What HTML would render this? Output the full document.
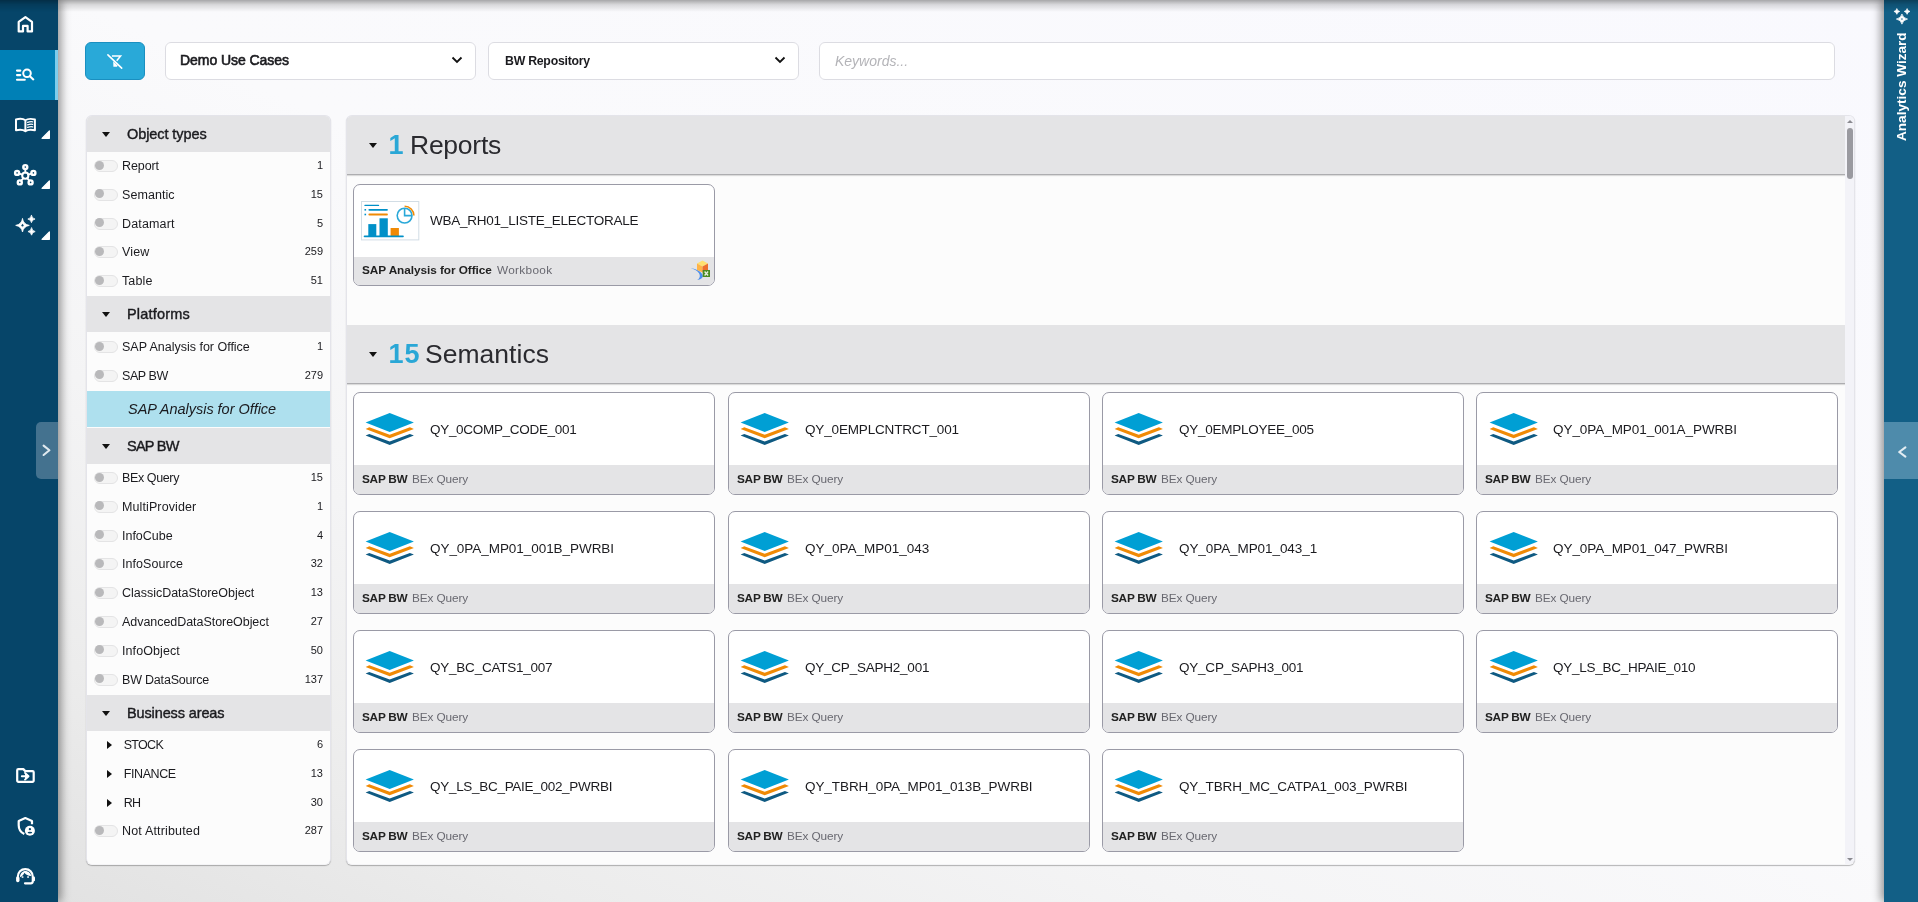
<!DOCTYPE html>
<html lang="en">
<head>
<meta charset="utf-8">
<title>Catalog</title>
<style>
*{box-sizing:border-box;margin:0;padding:0}
html,body{width:1918px;height:902px;overflow:hidden}
#lp,#mp,.sel,#kw,#rbar .lbl{will-change:transform}
body{font-family:"Liberation Sans",sans-serif;color:#1b1b1f;position:relative;
 background:linear-gradient(to top right,#e1e1e1 0%,#ececec 15%,#f4f4f5 31%,#fafafc 52%,#f9f9fe 100%);}
#topshade{position:absolute;left:0;top:0;width:1918px;height:12px;z-index:50;pointer-events:none;
 background:linear-gradient(to bottom,rgba(0,0,0,.33) 0%,rgba(0,0,0,.13) 40%,rgba(0,0,0,0) 100%)}
/* left nav */
#nav{position:absolute;left:0;top:0;width:58px;height:902px;background:#064569;z-index:20;
 box-shadow:3px 0 9px rgba(0,0,0,.42)}
#nav .act{position:absolute;left:0;top:50px;width:58px;height:50px;background:#0080b6;border-right:3px solid #7dcdec}
#nav svg{position:absolute}
#nav .tri{position:absolute;width:0;height:0;border-left:6px solid transparent;border-bottom:6px solid #fff}
#ltog{position:absolute;left:36px;top:422px;width:22px;height:57px;background:#44728f;border-radius:5px 0 0 5px}
/* right bar */
#rbar{position:absolute;left:1884px;top:0;width:34px;height:902px;background:#125f86;z-index:20;
 box-shadow:-3px 0 9px rgba(0,0,0,.42)}
#rtog{position:absolute;left:0;top:422px;width:34px;height:57px;background:#4e8bab}
#rbar .lbl{position:absolute;left:0;top:0;width:34px;height:160px}
#rbar .lbl span{position:absolute;left:18.4px;top:140.5px;transform-origin:0 0;transform:rotate(-90deg) translateY(-50%);
 white-space:nowrap;color:#fff;font-weight:bold;font-size:13.6px;line-height:16px}
/* toolbar */
#fbtn{position:absolute;left:85px;top:42px;width:60px;height:38px;background:#29a9d8;border:1px solid #1a8fc0;border-radius:6px}
.sel{position:absolute;top:42px;height:38px;width:311px;background:#fff;border:1px solid #dcdce2;border-radius:6px}
.sel span{position:absolute;left:14px;top:0;line-height:34.5px;font-weight:bold;white-space:nowrap}
.sel svg{position:absolute;right:12px;top:11px}
#kw{position:absolute;left:819px;top:42px;width:1016px;height:38px;background:#fff;border:1px solid #dcdce2;border-radius:6px}
#kw span{position:absolute;left:15px;top:0;line-height:36px;font-style:italic;color:#b4b4b8;font-size:14px}
/* left filter panel */
#lp{position:absolute;left:86px;top:115px;width:245px;height:750px;background:#fcfcfc;
 border:1px solid #e4e4ea;border-bottom-color:#f4f4f6;border-radius:6px;overflow:hidden;box-shadow:0 1px 1px rgba(0,0,0,.27)}
.lh{position:absolute;left:0;width:243px;height:36px;background:#e4e4e6}
.lh i{position:absolute;left:15px;top:16px;width:0;height:0;border-left:4.5px solid transparent;border-right:4.5px solid transparent;border-top:5px solid #111}
.lh b{position:absolute;left:40px;top:0;line-height:36px;font-size:14.5px;font-weight:normal;-webkit-text-stroke:.4px #1b1b1f;white-space:nowrap}
.lr{position:absolute;left:0;width:243px;height:29px}
.lr .tg{position:absolute;left:7px;top:8px;width:24px;height:12px;border-radius:6px;background:#f4f4f4;border:1px solid #e4e4e5}
.lr .tg::after{content:"";position:absolute;left:0;top:-.4px;width:9px;height:9px;border-radius:50%;background:#b9b9bb}
.lr .tx{position:absolute;left:35px;top:0;line-height:29px;font-size:12.5px;white-space:nowrap}
.lr .ct{position:absolute;right:7px;top:0;line-height:27.4px;font-size:11px;white-space:nowrap}
.lr .ar{position:absolute;left:20px;top:10px;width:0;height:0;border-top:4px solid transparent;border-bottom:4px solid transparent;border-left:5px solid #111}
#hl{position:absolute;left:0;top:275px;width:243px;height:36px;background:#aee0ee}
#hl span{position:absolute;left:41px;top:0;line-height:36px;font-style:italic;font-size:14.5px;white-space:nowrap}
/* main panel */
#mp{position:absolute;left:346px;top:115px;width:1509px;height:750px;background:#fcfcfc;
 border:1px solid #e4e4ea;border-bottom-color:#f4f4f6;border-radius:6px;overflow:hidden;box-shadow:0 1px 1px rgba(0,0,0,.27)}
.sh{position:absolute;left:0;width:1498px;height:59px;background:#e4e4e6;border-bottom:1px solid #adadb0;box-shadow:0 1px 1px rgba(0,0,0,.13)}
.sh i{position:absolute;left:21.8px;top:26.6px;width:0;height:0;border-left:4.5px solid transparent;border-right:4.5px solid transparent;border-top:5px solid #111}
.sh .n{position:absolute;left:41.5px;top:0;line-height:59px;font-size:27px;color:#2aa7d6;font-weight:bold;white-space:nowrap}
.sh .t{position:absolute;top:0;line-height:59px;font-size:26.5px;white-space:nowrap;color:#2a2a2f}
.cd{position:absolute;width:362px;height:102px;background:#fff;border:1px solid #9a9aa6;border-radius:7px;overflow:hidden}
.cd .ft{position:absolute;left:0;top:72px;width:360px;height:28px;background:#e4e4e6}
.cd .ft b{position:absolute;left:8px;top:0;line-height:27px;font-size:11.8px;white-space:nowrap;color:#222}
.cd .ft em{position:absolute;top:0;line-height:27px;font-size:11.8px;font-style:normal;color:#686870;white-space:nowrap}
.cd .nm{position:absolute;left:76px;top:0;line-height:71px;font-size:13.5px;white-space:nowrap;color:#1b1b1f}
.cd svg.ic{position:absolute;left:11px;top:19px}
.cd.s{height:103px}
.cd.s .ft{height:29px}
.cd.s .nm{top:.7px}
.cd.s .ft b,.cd.s .ft em{line-height:28.5px}
#sb{position:absolute;left:1498px;top:0;width:9px;height:748px;background:#f3f3f8}
#sb .th{position:absolute;left:2px;top:12px;width:6px;height:51px;border-radius:3px;background:#9a9aa0}
#sb .u{position:absolute;left:2px;top:4px;width:0;height:0;border-left:3px solid transparent;border-right:3px solid transparent;border-bottom:3px solid #8a8a90}
#sb .d{position:absolute;left:2px;bottom:3px;width:0;height:0;border-left:3px solid transparent;border-right:3px solid transparent;border-top:3px solid #8a8a90}
</style>
</head>
<body>
<div id="topshade"></div>

<!-- NAV -->
<div id="nav">
 <div class="act"></div>
 <div id="ltog"><svg width="22" height="57" viewBox="0 0 22 57" style="left:0;top:0"><path d="M7.6 23.6L13.4 28.3L7.6 33" fill="none" stroke="#e0e9ef" stroke-width="2.1" stroke-linecap="round" stroke-linejoin="round"/></svg></div>
 <svg width="58" height="902" viewBox="0 0 58 902" style="left:0;top:0" fill="none" stroke="#fff" stroke-linecap="round" stroke-linejoin="round">
 <!-- home -->
 <path d="M18.7 31.4V21.9L25.4 17.1L32 21.9V31.4H27.6V25.9H23V31.4Z" stroke-width="2.2"/>
 <!-- list search -->
 <path d="M17 70.6H20.3M17 75.1H20.3M17 79.8H24.8" stroke-width="2.1"/>
 <circle cx="27" cy="73.3" r="3.8" stroke-width="2"/>
 <path d="M29.9 76.2L33.3 79.4" stroke-width="2.1"/>
 <!-- book -->
 <path d="M25.4 120.3C23.4 118.8 19.6 118.6 16 119.4V130.2C19.6 129.4 23.4 129.7 25.4 131.2C27.4 129.7 31.2 129.4 34.9 130.2V119.4C31.2 118.6 27.4 118.8 25.4 120.3ZM25.4 120.3V131" stroke-width="2"/>
 <path d="M27.6 122.3C29.4 121.7 31 121.6 32.6 121.8M27.6 124.8C29.4 124.2 31 124.1 32.6 124.3M27.6 127.3C29.4 126.7 31 126.6 32.6 126.8" stroke-width="1.3"/>
 <!-- hub -->
 <path d="M25.3 172.6V169.2M22.4 174.7L19.2 173.6M28.2 174.7L31.3 173.6M23.5 178.2L21.2 180.6M27.1 178.2L29.3 180.6" stroke-width="1.8"/>
 <circle cx="25.3" cy="175.7" r="3.1" stroke-width="2"/>
 <circle cx="25.3" cy="167.1" r="2" stroke-width="2.4"/>
 <circle cx="17.1" cy="172.9" r="2" stroke-width="2.4"/>
 <circle cx="33.4" cy="172.9" r="2" stroke-width="2.4"/>
 <circle cx="19.8" cy="182.4" r="2" stroke-width="2.4"/>
 <circle cx="30.6" cy="182.4" r="2" stroke-width="2.4"/>
 <!-- sparkles -->
 <path fill-rule="evenodd" fill="#fff" stroke="#fff" stroke-width=".8" stroke-linejoin="round" d="M22.5 218.8Q23.5 224.4 29.3 225.4Q23.5 226.4 22.5 232.0Q21.5 226.4 15.7 225.4Q21.5 224.4 22.5 218.8ZM22.5 223.6L20.9 225.4L22.5 227.20000000000002L24.1 225.4Z"/>
 <path fill="#fff" stroke="#fff" stroke-width=".8" stroke-linejoin="round" d="M31.45 215.45000000000002Q32.0 218.5 35.05 219.05Q32.0 219.60000000000002 31.45 222.65Q30.9 219.60000000000002 27.849999999999998 219.05Q30.9 218.5 31.45 215.45000000000002Z"/>
 <path fill="#fff" stroke="#fff" stroke-width=".8" stroke-linejoin="round" d="M31.57 227.97Q32.12 231.01999999999998 35.17 231.57Q32.12 232.12 31.57 235.17Q31.02 232.12 27.97 231.57Q31.02 231.01999999999998 31.57 227.97Z"/>
 <!-- corner triangles -->
 <path d="M49.4 130.9V138.3H42Z M49.4 180.9V188.3H42Z M49.4 231.9V239.3H42Z" fill="#fff" stroke-width="1.2"/>
 <!-- folder -->
 <path d="M18.4 769.1H23.3L25.3 771.1H32.5A1.2 1.2 0 0 1 33.7 772.3V780.6A1.2 1.2 0 0 1 32.5 781.8H18.4A1.2 1.2 0 0 1 17.2 780.6V770.3A1.2 1.2 0 0 1 18.4 769.1Z" stroke-width="2.2"/>
 <path d="M21.8 776.2H27.5" stroke-width="1.9"/>
 <path d="M25 772.9L28.6 776.2L25 779.6" stroke-width="1.9" fill="#fff"/>
 <!-- shield -->
 <path d="M32 824.2V820.9L25.3 818.1L18.7 820.9V825.2C18.7 829.3 21 832.4 24.3 834" stroke-width="2.2" stroke-linecap="butt"/>
 <circle cx="29.9" cy="830.8" r="5" fill="#fff" stroke="none"/>
 <circle cx="29.9" cy="829.2" r="1.15" fill="#064569" stroke="none"/>
 <ellipse cx="29.9" cy="832.6" rx="2.3" ry="0.85" fill="#064569" stroke="none"/>
 <!-- headset -->
 <path d="M17.8 878V876.8C17.8 872.3 21.1 869.1 25.3 869.1C29.5 869.1 32.8 872.3 32.8 876.8V881.3C32.8 882.6 32 883.3 30.8 883.3H25" stroke-width="2.2"/>
 <rect x="16.1" y="876.4" width="3.4" height="5.8" rx="1.6" fill="#fff" stroke="none"/>
 <rect x="33" y="876.6" width="2" height="4.6" rx="1" fill="#fff" stroke="none"/>
 <path d="M19.9 877.2C20.2 873.5 22.5 871 25.3 871C28.3 871 30.8 873.2 31.2 875.9C28.4 876 25.6 874.6 24.4 872.7C23.6 874.8 21.9 876.6 19.9 877.2Z" fill="#fff" stroke="none"/>
 <rect x="21.7" y="876.3" width="1.7" height="1.5" fill="#fff" stroke="none"/>
 <rect x="27.2" y="876.3" width="1.7" height="1.5" fill="#fff" stroke="none"/>
 <!-- left toggle chevron -->
</svg>
</div>

<!-- RIGHT BAR -->
<div id="rbar">
 <div class="lbl"><span>Analytics Wizard</span></div>
 <div id="rtog"><svg width="34" height="57" viewBox="0 0 34 57"><path d="M21.4 25.3L15.2 30L21.4 34.7" fill="none" stroke="#e3edf3" stroke-width="2.1" stroke-linecap="round" stroke-linejoin="round"/></svg></div>
 <svg width="34" height="40" viewBox="0 0 34 40" style="position:absolute;left:0;top:0" fill="#fff" stroke="#fff" stroke-width=".7" stroke-linejoin="round">
  <path d="M12.85 8.54Q13.3 10.99 15.75 11.44Q13.3 11.89 12.85 14.34Q12.4 11.89 9.95 11.44Q12.4 10.99 12.85 8.54Z"/>
  <path d="M23.1 8.54Q23.55 10.99 26.0 11.44Q23.55 11.89 23.1 14.34Q22.65 11.89 20.2 11.44Q22.65 10.99 23.1 8.54Z"/>
  <path fill-rule="evenodd" d="M17.95 13.97Q18.85 18.17 23.55 19.07Q18.85 19.97 17.95 24.17Q17.05 19.97 12.35 19.07Q17.05 18.17 17.95 13.97ZM17.95 17.92A1.15 1.15 0 1 0 17.95 20.22A1.15 1.15 0 1 0 17.95 17.92Z"/>
 </svg>
</div>

<!-- TOOLBAR -->
<div id="fbtn"><svg width="58" height="36" viewBox="86 43 58 36" style="position:absolute;left:0;top:0">
 <path d="M107.9 54.8L121.7 68.1" stroke="#fff" stroke-width="1.6" stroke-linecap="round" fill="none"/>
 <path d="M111.9 56H120.6L116.7 60.7" stroke="#fff" stroke-width="1.5" fill="none" stroke-linejoin="miter"/>
 <path d="M113.2 61.3L117.2 65.2V66.8H113.4Z" fill="#fff"/>
</svg></div>
<div class="sel" style="left:165px"><span style="font-size:14px;font-weight:normal;-webkit-text-stroke:.6px #1b1b1f;letter-spacing:-.06px">Demo Use Cases</span>
 <svg width="12" height="12" viewBox="0 0 12 12"><path d="M1.5 3.5 L6 8 L10.5 3.5" fill="none" stroke="#111" stroke-width="1.8"/></svg></div>
<div class="sel" style="left:488px"><span style="font-size:12.3px;left:16px;letter-spacing:-.25px;line-height:36.5px">BW Repository</span>
 <svg width="12" height="12" viewBox="0 0 12 12"><path d="M1.5 3.5 L6 8 L10.5 3.5" fill="none" stroke="#111" stroke-width="1.8"/></svg></div>
<div id="kw"><span>Keywords...</span></div>

<!-- LEFT PANEL -->
<div id="lp">
<div class="lh" style="top:0px"><i></i><b style="letter-spacing:-0.083px">Object types</b></div>
<div class="lr" style="top:36px"><span class="tg"></span><span class="tx"><span style="letter-spacing:-0.086px">Report</span></span><span class="ct">1</span></div>
<div class="lr" style="top:64.8px"><span class="tg"></span><span class="tx"><span style="letter-spacing:0.062px">Semantic</span></span><span class="ct">15</span></div>
<div class="lr" style="top:93.6px"><span class="tg"></span><span class="tx"><span style="letter-spacing:0.15px">Datamart</span></span><span class="ct">5</span></div>
<div class="lr" style="top:122.4px"><span class="tg"></span><span class="tx"><span style="letter-spacing:0.133px">View</span></span><span class="ct">259</span></div>
<div class="lr" style="top:151.2px"><span class="tg"></span><span class="tx"><span style="letter-spacing:0.123px">Table</span></span><span class="ct">51</span></div>
<div class="lh" style="top:180px"><i></i><b style="letter-spacing:0.196px">Platforms</b></div>
<div class="lr" style="top:217px"><span class="tg"></span><span class="tx"><span style="letter-spacing:-0.012px">SAP Analysis for Office</span></span><span class="ct">1</span></div>
<div class="lr" style="top:245.8px"><span class="tg"></span><span class="tx"><span style="letter-spacing:-0.437px">SAP BW</span></span><span class="ct">279</span></div>
<div id="hl"><span style="letter-spacing:-0.03px">SAP Analysis for Office</span></div>
<div class="lh" style="top:312px"><i></i><b style="letter-spacing:-0.75px">SAP BW</b></div>
<div class="lr" style="top:348px"><span class="tg"></span><span class="tx"><span style="letter-spacing:-0.382px">BEx Query</span></span><span class="ct">15</span></div>
<div class="lr" style="top:376.8px"><span class="tg"></span><span class="tx"><span style="letter-spacing:0.105px">MultiProvider</span></span><span class="ct">1</span></div>
<div class="lr" style="top:405.6px"><span class="tg"></span><span class="tx"><span style="letter-spacing:-0.017px">InfoCube</span></span><span class="ct">4</span></div>
<div class="lr" style="top:434.4px"><span class="tg"></span><span class="tx"><span style="letter-spacing:0.054px">InfoSource</span></span><span class="ct">32</span></div>
<div class="lr" style="top:463.2px"><span class="tg"></span><span class="tx"><span style="letter-spacing:-0.018px">ClassicDataStoreObject</span></span><span class="ct">13</span></div>
<div class="lr" style="top:492.0px"><span class="tg"></span><span class="tx"><span style="letter-spacing:-0.048px">AdvancedDataStoreObject</span></span><span class="ct">27</span></div>
<div class="lr" style="top:520.8px"><span class="tg"></span><span class="tx"><span style="letter-spacing:0.082px">InfoObject</span></span><span class="ct">50</span></div>
<div class="lr" style="top:549.6px"><span class="tg"></span><span class="tx"><span style="letter-spacing:-0.194px">BW DataSource</span></span><span class="ct">137</span></div>
<div class="lh" style="top:579px"><i></i><b style="letter-spacing:-0.124px">Business areas</b></div>
<div class="lr" style="top:615px"><span class="ar"></span><span class="tx" style="left:36.7px"><span style="letter-spacing:-0.687px">STOCK</span></span><span class="ct">6</span></div>
<div class="lr" style="top:643.8px"><span class="ar"></span><span class="tx" style="left:36.7px"><span style="letter-spacing:-0.395px">FINANCE</span></span><span class="ct">13</span></div>
<div class="lr" style="top:672.6px"><span class="ar"></span><span class="tx" style="left:36.7px"><span style="letter-spacing:-0.727px">RH</span></span><span class="ct">30</span></div>
<div class="lr" style="top:701.4px"><span class="tg"></span><span class="tx"><span style="letter-spacing:0.162px">Not Attributed</span></span><span class="ct">287</span></div>
</div>

<!-- MAIN PANEL -->
<div id="mp">
<div class="sh" style="top:0px"><i></i><span class="n" style="letter-spacing:0px">1</span><span class="t" style="left:63px;letter-spacing:-0.256px">Reports</span></div>
<div class="cd" style="left:6px;top:68px"><svg class="ic" style="left:7px;top:16px" width="59" height="40" viewBox="0 0 59 40"><rect x="0.5" y="0.5" width="57.3" height="38.4" fill="#fff" stroke="#d2dde5" stroke-width="1"/><path d="M4 4.4H17.5" stroke="#0090c8" stroke-width="1.4" stroke-linecap="round"/><path d="M8.3 8.8H26" stroke="#0090c8" stroke-width="1.8" stroke-linecap="round"/><path d="M8.3 13.5H26" stroke="#f08a05" stroke-width="1.8" stroke-linecap="round"/><rect x="3.5" y="8" width="1.6" height="1.6" fill="#0090c8"/><rect x="3.5" y="12.7" width="1.6" height="1.6" fill="#0090c8"/><rect x="7.3" y="23.1" width="8" height="12" fill="#0090c8"/><rect x="18.5" y="17.3" width="8.3" height="17.8" fill="#0090c8"/><rect x="29.6" y="27" width="8.3" height="8" fill="#f08a05"/><path d="M3.5 35.4H42" stroke="#0090c8" stroke-width="1.6" stroke-linecap="round"/><circle cx="43.6" cy="14.6" r="7.4" fill="none" stroke="#29a8d8" stroke-width="1.6"/><path d="M43.6 7.2V14.6H51" fill="none" stroke="#29a8d8" stroke-width="1.6"/><path d="M43.6 5.3A9.3 9.3 0 0 1 52.9 14.6" fill="none" stroke="#f08a05" stroke-width="1.6"/></svg><span class="nm"><span style="letter-spacing:-0.238px">WBA_RH01_LISTE_ELECTORALE</span></span><div class="ft"><b><span style="letter-spacing:-0.06px">SAP Analysis for Office</span></b><em style="left:143px"><span style="letter-spacing:0.314px">Workbook</span></em><svg style="position:absolute;left:336px;top:3px" width="22" height="22" viewBox="0 0 22 22"><path d="M0.7 8.2C6 8.6 11.5 11.5 12.8 15.5C13.4 17.6 10.5 19.6 7 20C10 18.6 10.6 15.5 8.8 13C7 10.5 4 9 0.7 8.2Z" fill="#4a8ff0"/><polygon points="12.5,0.5 18,3.5 12.5,6.5 7,3.5" fill="#ffe070"/><polygon points="7,3.5 12.5,6.5 12.5,12.5 7,10" fill="#ffb347"/><polygon points="18,3.5 12.5,6.5 12.5,12.5 18,10" fill="#ec6f2d"/><rect x="12.7" y="10" width="7.3" height="7" fill="#4b8b22"/><path d="M14.6 11.5L18.1 15.5M18.1 11.5L14.6 15.5" stroke="#e8f0e0" stroke-width="1.3"/></svg></div></div>
<div class="sh" style="top:209px"><i></i><span class="n" style="letter-spacing:0.9px">15</span><span class="t" style="left:78px;letter-spacing:0.032px">Semantics</span></div>
<div class="cd s" style="left:6px;top:276px"><svg class="ic" width="51" height="34" viewBox="0 0 51 34"><polygon points="0.6,10.6 24.7,1.1 48.9,10.6 24.7,19.9" fill="#009fd4"/><polygon points="0.6,17.05 4.3,15.3 24.7,22.8 44.9,15.3 48.9,17.05 24.7,26.2" fill="#f08a05"/><polygon points="0.6,23.6 4.3,21.9 24.7,29.4 44.9,21.9 48.9,23.6 24.7,32.9" fill="#0f5a82"/></svg><span class="nm"><span style="letter-spacing:-0.304px">QY_0COMP_CODE_001</span></span><div class="ft"><b><span style="letter-spacing:-0.248px">SAP BW</span></b><em style="left:58px"><span style="letter-spacing:-0.104px">BEx Query</span></em></div></div>
<div class="cd s" style="left:381px;top:276px"><svg class="ic" width="51" height="34" viewBox="0 0 51 34"><polygon points="0.6,10.6 24.7,1.1 48.9,10.6 24.7,19.9" fill="#009fd4"/><polygon points="0.6,17.05 4.3,15.3 24.7,22.8 44.9,15.3 48.9,17.05 24.7,26.2" fill="#f08a05"/><polygon points="0.6,23.6 4.3,21.9 24.7,29.4 44.9,21.9 48.9,23.6 24.7,32.9" fill="#0f5a82"/></svg><span class="nm"><span style="letter-spacing:-0.161px">QY_0EMPLCNTRCT_001</span></span><div class="ft"><b><span style="letter-spacing:-0.248px">SAP BW</span></b><em style="left:58px"><span style="letter-spacing:-0.104px">BEx Query</span></em></div></div>
<div class="cd s" style="left:755px;top:276px"><svg class="ic" width="51" height="34" viewBox="0 0 51 34"><polygon points="0.6,10.6 24.7,1.1 48.9,10.6 24.7,19.9" fill="#009fd4"/><polygon points="0.6,17.05 4.3,15.3 24.7,22.8 44.9,15.3 48.9,17.05 24.7,26.2" fill="#f08a05"/><polygon points="0.6,23.6 4.3,21.9 24.7,29.4 44.9,21.9 48.9,23.6 24.7,32.9" fill="#0f5a82"/></svg><span class="nm"><span style="letter-spacing:-0.252px">QY_0EMPLOYEE_005</span></span><div class="ft"><b><span style="letter-spacing:-0.248px">SAP BW</span></b><em style="left:58px"><span style="letter-spacing:-0.104px">BEx Query</span></em></div></div>
<div class="cd s" style="left:1129px;top:276px"><svg class="ic" width="51" height="34" viewBox="0 0 51 34" style="left:12px"><polygon points="0.6,10.6 24.7,1.1 48.9,10.6 24.7,19.9" fill="#009fd4"/><polygon points="0.6,17.05 4.3,15.3 24.7,22.8 44.9,15.3 48.9,17.05 24.7,26.2" fill="#f08a05"/><polygon points="0.6,23.6 4.3,21.9 24.7,29.4 44.9,21.9 48.9,23.6 24.7,32.9" fill="#0f5a82"/></svg><span class="nm"><span style="letter-spacing:-0.054px">QY_0PA_MP01_001A_PWRBI</span></span><div class="ft"><b><span style="letter-spacing:-0.248px">SAP BW</span></b><em style="left:58px"><span style="letter-spacing:-0.104px">BEx Query</span></em></div></div>
<div class="cd s" style="left:6px;top:395px"><svg class="ic" width="51" height="34" viewBox="0 0 51 34"><polygon points="0.6,10.6 24.7,1.1 48.9,10.6 24.7,19.9" fill="#009fd4"/><polygon points="0.6,17.05 4.3,15.3 24.7,22.8 44.9,15.3 48.9,17.05 24.7,26.2" fill="#f08a05"/><polygon points="0.6,23.6 4.3,21.9 24.7,29.4 44.9,21.9 48.9,23.6 24.7,32.9" fill="#0f5a82"/></svg><span class="nm"><span style="letter-spacing:-0.05px">QY_0PA_MP01_001B_PWRBI</span></span><div class="ft"><b><span style="letter-spacing:-0.248px">SAP BW</span></b><em style="left:58px"><span style="letter-spacing:-0.104px">BEx Query</span></em></div></div>
<div class="cd s" style="left:381px;top:395px"><svg class="ic" width="51" height="34" viewBox="0 0 51 34"><polygon points="0.6,10.6 24.7,1.1 48.9,10.6 24.7,19.9" fill="#009fd4"/><polygon points="0.6,17.05 4.3,15.3 24.7,22.8 44.9,15.3 48.9,17.05 24.7,26.2" fill="#f08a05"/><polygon points="0.6,23.6 4.3,21.9 24.7,29.4 44.9,21.9 48.9,23.6 24.7,32.9" fill="#0f5a82"/></svg><span class="nm"><span style="letter-spacing:-0.009px">QY_0PA_MP01_043</span></span><div class="ft"><b><span style="letter-spacing:-0.248px">SAP BW</span></b><em style="left:58px"><span style="letter-spacing:-0.104px">BEx Query</span></em></div></div>
<div class="cd s" style="left:755px;top:395px"><svg class="ic" width="51" height="34" viewBox="0 0 51 34"><polygon points="0.6,10.6 24.7,1.1 48.9,10.6 24.7,19.9" fill="#009fd4"/><polygon points="0.6,17.05 4.3,15.3 24.7,22.8 44.9,15.3 48.9,17.05 24.7,26.2" fill="#f08a05"/><polygon points="0.6,23.6 4.3,21.9 24.7,29.4 44.9,21.9 48.9,23.6 24.7,32.9" fill="#0f5a82"/></svg><span class="nm"><span style="letter-spacing:-0.074px">QY_0PA_MP01_043_1</span></span><div class="ft"><b><span style="letter-spacing:-0.248px">SAP BW</span></b><em style="left:58px"><span style="letter-spacing:-0.104px">BEx Query</span></em></div></div>
<div class="cd s" style="left:1129px;top:395px"><svg class="ic" width="51" height="34" viewBox="0 0 51 34" style="left:12px"><polygon points="0.6,10.6 24.7,1.1 48.9,10.6 24.7,19.9" fill="#009fd4"/><polygon points="0.6,17.05 4.3,15.3 24.7,22.8 44.9,15.3 48.9,17.05 24.7,26.2" fill="#f08a05"/><polygon points="0.6,23.6 4.3,21.9 24.7,29.4 44.9,21.9 48.9,23.6 24.7,32.9" fill="#0f5a82"/></svg><span class="nm"><span style="letter-spacing:-0.057px">QY_0PA_MP01_047_PWRBI</span></span><div class="ft"><b><span style="letter-spacing:-0.248px">SAP BW</span></b><em style="left:58px"><span style="letter-spacing:-0.104px">BEx Query</span></em></div></div>
<div class="cd s" style="left:6px;top:514px"><svg class="ic" width="51" height="34" viewBox="0 0 51 34"><polygon points="0.6,10.6 24.7,1.1 48.9,10.6 24.7,19.9" fill="#009fd4"/><polygon points="0.6,17.05 4.3,15.3 24.7,22.8 44.9,15.3 48.9,17.05 24.7,26.2" fill="#f08a05"/><polygon points="0.6,23.6 4.3,21.9 24.7,29.4 44.9,21.9 48.9,23.6 24.7,32.9" fill="#0f5a82"/></svg><span class="nm"><span style="letter-spacing:-0.228px">QY_BC_CATS1_007</span></span><div class="ft"><b><span style="letter-spacing:-0.248px">SAP BW</span></b><em style="left:58px"><span style="letter-spacing:-0.104px">BEx Query</span></em></div></div>
<div class="cd s" style="left:381px;top:514px"><svg class="ic" width="51" height="34" viewBox="0 0 51 34"><polygon points="0.6,10.6 24.7,1.1 48.9,10.6 24.7,19.9" fill="#009fd4"/><polygon points="0.6,17.05 4.3,15.3 24.7,22.8 44.9,15.3 48.9,17.05 24.7,26.2" fill="#f08a05"/><polygon points="0.6,23.6 4.3,21.9 24.7,29.4 44.9,21.9 48.9,23.6 24.7,32.9" fill="#0f5a82"/></svg><span class="nm"><span style="letter-spacing:-0.225px">QY_CP_SAPH2_001</span></span><div class="ft"><b><span style="letter-spacing:-0.248px">SAP BW</span></b><em style="left:58px"><span style="letter-spacing:-0.104px">BEx Query</span></em></div></div>
<div class="cd s" style="left:755px;top:514px"><svg class="ic" width="51" height="34" viewBox="0 0 51 34"><polygon points="0.6,10.6 24.7,1.1 48.9,10.6 24.7,19.9" fill="#009fd4"/><polygon points="0.6,17.05 4.3,15.3 24.7,22.8 44.9,15.3 48.9,17.05 24.7,26.2" fill="#f08a05"/><polygon points="0.6,23.6 4.3,21.9 24.7,29.4 44.9,21.9 48.9,23.6 24.7,32.9" fill="#0f5a82"/></svg><span class="nm"><span style="letter-spacing:-0.219px">QY_CP_SAPH3_001</span></span><div class="ft"><b><span style="letter-spacing:-0.248px">SAP BW</span></b><em style="left:58px"><span style="letter-spacing:-0.104px">BEx Query</span></em></div></div>
<div class="cd s" style="left:1129px;top:514px"><svg class="ic" width="51" height="34" viewBox="0 0 51 34" style="left:12px"><polygon points="0.6,10.6 24.7,1.1 48.9,10.6 24.7,19.9" fill="#009fd4"/><polygon points="0.6,17.05 4.3,15.3 24.7,22.8 44.9,15.3 48.9,17.05 24.7,26.2" fill="#f08a05"/><polygon points="0.6,23.6 4.3,21.9 24.7,29.4 44.9,21.9 48.9,23.6 24.7,32.9" fill="#0f5a82"/></svg><span class="nm"><span style="letter-spacing:-0.258px">QY_LS_BC_HPAIE_010</span></span><div class="ft"><b><span style="letter-spacing:-0.248px">SAP BW</span></b><em style="left:58px"><span style="letter-spacing:-0.104px">BEx Query</span></em></div></div>
<div class="cd s" style="left:6px;top:633px"><svg class="ic" width="51" height="34" viewBox="0 0 51 34"><polygon points="0.6,10.6 24.7,1.1 48.9,10.6 24.7,19.9" fill="#009fd4"/><polygon points="0.6,17.05 4.3,15.3 24.7,22.8 44.9,15.3 48.9,17.05 24.7,26.2" fill="#f08a05"/><polygon points="0.6,23.6 4.3,21.9 24.7,29.4 44.9,21.9 48.9,23.6 24.7,32.9" fill="#0f5a82"/></svg><span class="nm"><span style="letter-spacing:-0.293px">QY_LS_BC_PAIE_002_PWRBI</span></span><div class="ft"><b><span style="letter-spacing:-0.248px">SAP BW</span></b><em style="left:58px"><span style="letter-spacing:-0.104px">BEx Query</span></em></div></div>
<div class="cd s" style="left:381px;top:633px"><svg class="ic" width="51" height="34" viewBox="0 0 51 34"><polygon points="0.6,10.6 24.7,1.1 48.9,10.6 24.7,19.9" fill="#009fd4"/><polygon points="0.6,17.05 4.3,15.3 24.7,22.8 44.9,15.3 48.9,17.05 24.7,26.2" fill="#f08a05"/><polygon points="0.6,23.6 4.3,21.9 24.7,29.4 44.9,21.9 48.9,23.6 24.7,32.9" fill="#0f5a82"/></svg><span class="nm"><span style="letter-spacing:-0.069px">QY_TBRH_0PA_MP01_013B_PWRBI</span></span><div class="ft"><b><span style="letter-spacing:-0.248px">SAP BW</span></b><em style="left:58px"><span style="letter-spacing:-0.104px">BEx Query</span></em></div></div>
<div class="cd s" style="left:755px;top:633px"><svg class="ic" width="51" height="34" viewBox="0 0 51 34"><polygon points="0.6,10.6 24.7,1.1 48.9,10.6 24.7,19.9" fill="#009fd4"/><polygon points="0.6,17.05 4.3,15.3 24.7,22.8 44.9,15.3 48.9,17.05 24.7,26.2" fill="#f08a05"/><polygon points="0.6,23.6 4.3,21.9 24.7,29.4 44.9,21.9 48.9,23.6 24.7,32.9" fill="#0f5a82"/></svg><span class="nm"><span style="letter-spacing:-0.136px">QY_TBRH_MC_CATPA1_003_PWRBI</span></span><div class="ft"><b><span style="letter-spacing:-0.248px">SAP BW</span></b><em style="left:58px"><span style="letter-spacing:-0.104px">BEx Query</span></em></div></div>
 <div id="sb"><div class="u"></div><div class="th"></div><div class="d"></div></div>
</div>
</body>
</html>
